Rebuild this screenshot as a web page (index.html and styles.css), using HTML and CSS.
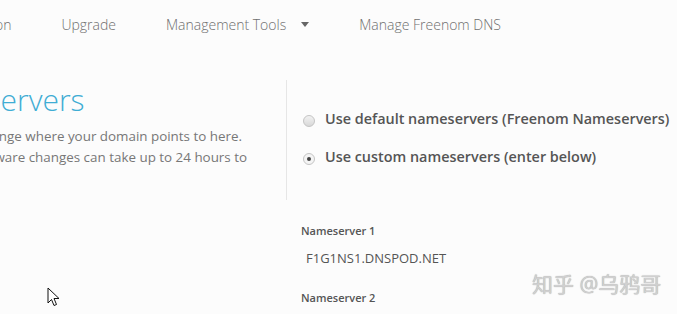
FILE: index.html
```html
<!DOCTYPE html>
<html lang="en">
<head>
  <meta charset="UTF-8" />
  <meta name="viewport" content="width=device-width, initial-scale=1" />
  <title>Manage Nameservers</title>
  <link rel="stylesheet" href="styles.css">
</head>
<body>
  <nav class="topnav">
    <a href="#" class="nav-link">Partner Integration</a>
    <a href="#" class="nav-link">Upgrade</a>
    <a href="#" class="nav-link dropdown">Management Tools <span class="caret"></span></a>
    <a href="#" class="nav-link">Manage Freenom DNS</a>
  </nav>

  <main class="nameservers">
    <section class="intro">
      <h1>Nameservers</h1>
      <p>You can change where your domain points to here.<br>
      Please be aware changes can take up to 24 hours to<br>
      apply.</p>
    </section>

    <section class="choice">
      <label class="radio-row">
        <span class="radio"></span>
        Use default nameservers (Freenom Nameservers)
      </label>
      <label class="radio-row">
        <span class="radio checked"></span>
        Use custom nameservers (enter below)
      </label>
    </section>

    <section class="fields">
      <div class="field">
        <h3>Nameserver 1</h3>
        <p class="value">F1G1NS1.DNSPOD.NET</p>
      </div>
      <div class="field">
        <h3>Nameserver 2</h3>
        <p class="value">F1G1NS2.DNSPOD.NET</p>
      </div>
    </section>
  </main>

  <div class="watermark">知乎 @乌鸦哥</div>

  <!-- mouse pointer from the screenshot -->
  <svg class="cursor" width="14" height="20" viewBox="0 0 14 20">
    <path d="M1 1 L1 16 L4.5 12.5 L7 18.5 L9.5 17.5 L7 11.5 L12 11.5 Z" fill="#fff" stroke="#111" stroke-width="1" stroke-linejoin="round"/>
  </svg>
</body>
</html>
```

FILE: styles.css
```css
body {
  margin: 0;
  font-family: 'Open Sans', 'Noto Sans CJK SC', sans-serif;
  background-color: #fcfcfc;
  color: #666;
  overflow: hidden;
  height: 314px;
  position: relative;
}

/* top navigation */
.topnav {
  display: flex;
  align-items: center;
  gap: 50px;
  height: 48px;
  margin-left: -108px;
}

.nav-link {
  font-size: 14px;
  font-weight: 300;
  color: #6f6f6f;
  text-decoration: none;
  white-space: nowrap;
}

.dropdown {
  display: flex;
  align-items: center;
  gap: 15px;
}

.caret {
  width: 0;
  height: 0;
  border-left: 4px solid transparent;
  border-right: 4px solid transparent;
  border-top: 5px solid #666;
  margin-top: 1px;
}

/* main grid */
.nameservers {
  display: grid;
  grid-template-columns: 356px 1fr;
  margin-left: -70px;
  margin-top: 32px;
}

.intro h1 {
  font-size: 30px;
  font-weight: 300;
  color: #3fadd4;
  margin: 0 0 6px -24px;
  line-height: 40px;
}

.intro p {
  font-size: 13.4px;
  line-height: 21px;
  color: #777;
  margin: 0 0 0 -6px;
  white-space: nowrap;
}

.choice {
  border-left: 1px solid #e6e6e6;
  padding: 28px 0 32px 16px;
  display: flex;
  flex-direction: column;
  gap: 16px;
}

.radio-row {
  display: flex;
  align-items: center;
  gap: 10px;
  font-size: 14.4px;
  font-weight: 600;
  color: #555;
  line-height: 22px;
  white-space: nowrap;
  cursor: pointer;
}

.radio {
  width: 10px;
  height: 10px;
  border-radius: 50%;
  border: 1px solid #c4c4c4;
  background: linear-gradient(#f2f2f2, #d8d8d8);
  margin-top: 4px;
  position: relative;
  flex-shrink: 0;
}

.radio.checked {
  background: #f4f4f4;
}

.radio.checked::after {
  content: "";
  position: absolute;
  left: 3px;
  top: 3px;
  width: 4px;
  height: 4px;
  border-radius: 50%;
  background: #444;
}

.fields {
  grid-column: 2;
  padding: 23px 0 0 15px;
}

.field h3 {
  font-size: 11px;
  font-weight: 600;
  color: #555;
  margin: 0;
  line-height: 16px;
}

.field .value {
  font-size: 13px;
  color: #555;
  margin: 9px 0 22px 5px;
  line-height: 20px;
}

.watermark {
  position: absolute;
  left: 532px;
  top: 268px;
  font-size: 21px;
  color: #d0d0d0;
  text-shadow: 0 0 1px #999;
  white-space: nowrap;
}

.cursor {
  position: absolute;
  left: 47px;
  top: 287px;
}
```
